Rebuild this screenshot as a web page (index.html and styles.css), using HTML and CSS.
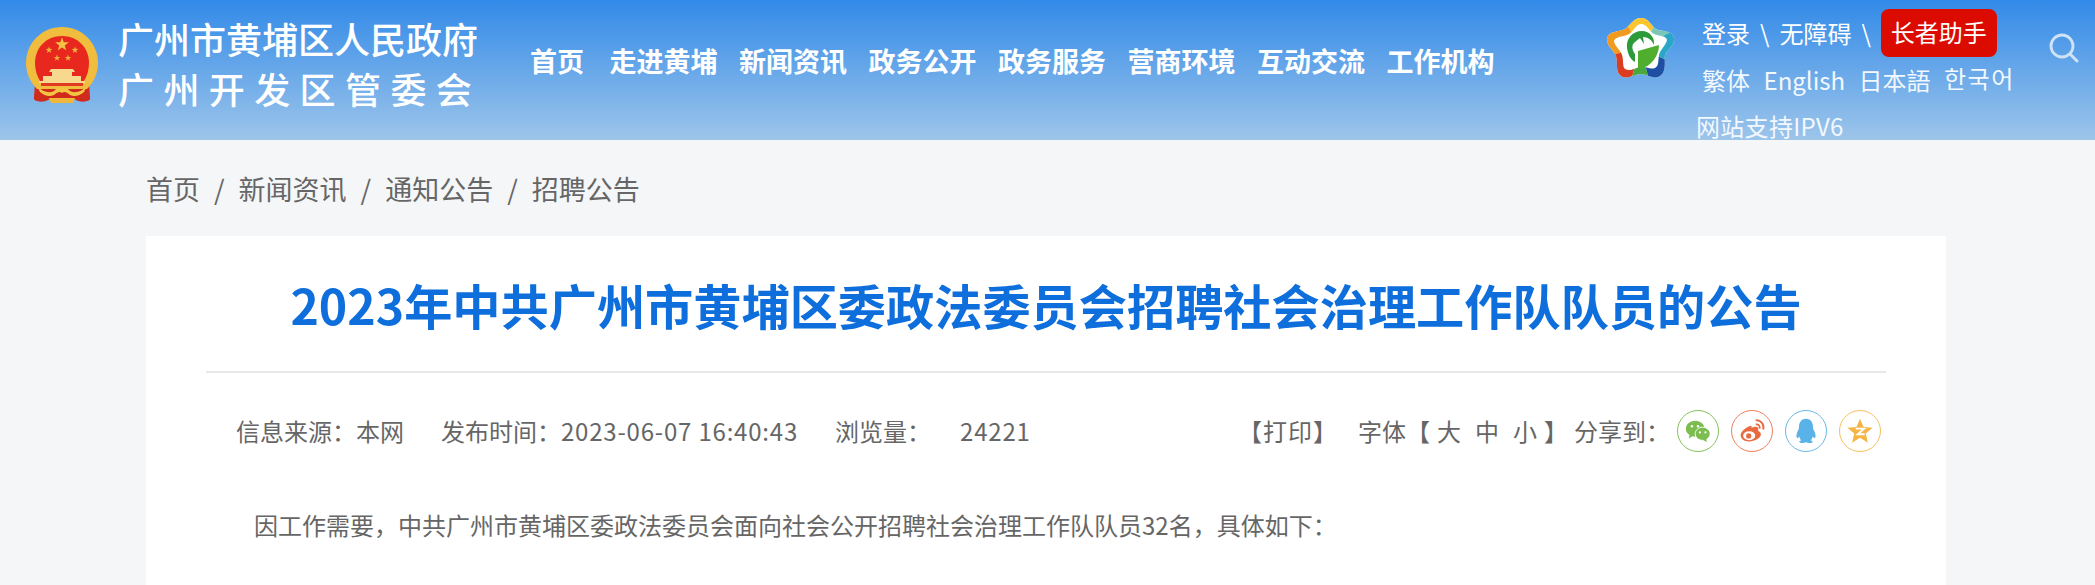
FILE: index.html
```html
<!DOCTYPE html>
<html lang="zh-CN">
<head>
<meta charset="utf-8">
<title>2023年中共广州市黄埔区委政法委员会招聘社会治理工作队队员的公告</title>
<link rel="stylesheet" href="styles.css">
</head>
<body>
<header class="site-header">
  <a class="brand">
    <svg class="emblem" viewBox="0 0 72 78" aria-hidden="true">
      <defs>
        <polygon id="star" points="0,-10 2.350,-3.240 9.510,-3.090 3.800,1.240 5.880,8.090 0,4 -5.880,8.090 -3.800,1.240 -9.510,-3.090 -2.350,-3.240"/>
      </defs>
      <path d="M9 56 L8 70 Q7 73 11 74 Q18 76 24 72 L48 72 Q54 76 61 74 Q65 73 64 70 L63 56 Z" fill="#cf2a1c"/>
      <path d="M36 0 C16 0 0 16 0 36 C0 46 4 55 11 62 L61 62 C68 55 72 46 72 36 C72 16 56 0 36 0 Z" fill="#f0bd3e"/>
      <path d="M36 9 C20 9 9 21 9 36 C9 43 11 49 14 54 L58 54 C61 49 63 43 63 36 C63 21 52 9 36 9 Z" fill="#e8281e"/>
      <use href="#star" transform="translate(36 17.500) scale(.72)" fill="#f4c344"/>
      <use href="#star" transform="translate(23 23) scale(.36)" fill="#eeb23c"/>
      <use href="#star" transform="translate(49 23) scale(.36)" fill="#eeb23c"/>
      <use href="#star" transform="translate(31 31) scale(.34)" fill="#eeb23c"/>
      <use href="#star" transform="translate(42 31) scale(.34)" fill="#eeb23c"/>
      <path d="M25 42 L47 42 L49 45 L46 45 L46 49 L55 49 L55 54 L17 54 L17 49 L26 49 L26 45 L23 45 Z" fill="#f6d98f"/>
      <rect x="13" y="54" width="46" height="2" fill="#f6d98f"/>
      <rect x="15" y="56" width="42" height="3" fill="#e03a22"/>
      <path d="M11 59 Q20 68 28 64 Q33 58 36 62 Q39 58 44 64 Q52 68 61 59 L58 65 Q51 71 44 68 Q39 63 36 66 Q33 63 28 68 Q21 71 14 65 Z" fill="#f4c443"/>
      <path d="M23 71 H49 L47 76 H25 Z" fill="#f0b83a"/>
    </svg>
    <span class="brand-text">
      <span class="brand-line">广州市黄埔区人民政府</span>
      <span class="brand-line brand-line-wide">广州开发区管委会</span>
    </span>
  </a>
  <nav class="main-nav">
    <a>首页</a><a>走进黄埔</a><a>新闻资讯</a><a>政务公开</a><a>政务服务</a><a>营商环境</a><a>互动交流</a><a>工作机构</a>
  </nav>
  <svg class="gov-logo" viewBox="0 0 68 62" aria-hidden="true">
    <defs>
      <clipPath id="petal">
        <path d="M34 0 C42 0 44 8 49 11 C55 14 66 12 67 20 C68 28 60 32 58 37 C57 43 60 53 53 58 C46 62 40 56 34 56 C28 56 21 62 14 58 C8 54 11 44 9 38 C7 32 0 29 0 21 C1 13 12 14 18 11 C23 8 26 0 34 0 Z"/>
      </clipPath>
    </defs>
    <g clip-path="url(#petal)">
      <rect width="68" height="62" fill="#fff"/>
      <polygon points="34,30 16,0 52,0" fill="#fbc52d"/>
      <polygon points="34,30 16,0 0,0 0,38" fill="#f29a1e"/>
      <polygon points="34,30 0,38 0,62 24,62" fill="#dc3d20"/>
      <polygon points="34,30 24,62 42,62" fill="#49a83a"/>
      <polygon points="34,30 42,62 68,62 68,46" fill="#1f4fa3"/>
      <polygon points="34,30 68,46 68,8" fill="#2aa6c6"/>
      <polygon points="34,30 52,0 68,0 68,12" fill="#7cc6b8"/>
    </g>
    <path d="M34 6 C40 6 42 13 47 16 C52 18 60 18 60 22 C59 27 53 32 52 37 C51 43 52 48 48 50 C43 52 38 48 33 49 C28 50 23 54 18 51 C15 48 17 43 15 37 C14 32 7 28 7 23 C8 18 17 19 22 16 C27 13 29 6 34 6 Z" fill="#fff"/>
    <path d="M35 13 C25 13 19 21 20 30 C21 37 24 42 28 44 L28 36 C25 32 24 27 28 24 L33 20 L37 26 L36 19 C41 19 45 22 47 27 C48 20 43 13 35 13 Z" fill="#2e9b3a"/>
    <path d="M31 33 L52 27 C52 37 45 48 33 51 L31 50 Z" fill="#4fae2e"/>
  </svg>
  <div class="tools">
    <div class="tools-row tools-row-top">
      <a>登录</a><span>\</span><a>无障碍</a><span>\</span><a class="elder">长者助手</a>
    </div>
    <div class="tools-row tools-row-lang">
      <a>繁体</a><a>English</a><a>日本語</a><a class="lang-ko" lang="ko">한국어</a>
    </div>
    <div class="ipv6">网站支持IPV6</div>
  </div>
  <svg class="search" viewBox="0 0 30 30" aria-hidden="true">
    <circle cx="13" cy="13" r="11" fill="none" stroke="#cfe2f6" stroke-width="2.800"/>
    <path d="M21 21 L28 28" stroke="#cfe2f6" stroke-width="3" stroke-linecap="round"/>
  </svg>
</header>

<main class="page">
  <div class="crumbs">
    <a>首页</a><span>/</span><a>新闻资讯</a><span>/</span><a>通知公告</a><span>/</span><a>招聘公告</a>
  </div>
  <article class="card">
    <h1 class="title">2023年中共广州市黄埔区委政法委员会招聘社会治理工作队队员的公告</h1>
    <div class="meta">
      <div class="meta-left">
        <span>信息来源：本网</span>
        <span>发布时间：<span class="date">2023-06-07 16:40:43</span></span>
        <span>浏览量：</span>
        <span class="views">24221</span>
      </div>
      <div class="meta-right">
        <span class="print">【打印】</span>
        <span class="size">字体【<i>大</i><i>中</i><i>小</i>】</span>
        <span>分享到：</span>
        <div class="share">
          <a class="share-btn wechat">
            <svg viewBox="0 0 30 30" aria-hidden="true">
              <path d="M12 4 C6 4 2 8 2 12.500 C2 15.500 3.600 17.800 6 19.200 L5 23 L9.200 20.500 C10 20.700 11 20.800 12 20.800 C18 20.800 22 17 22 12.500 C22 8 18 4 12 4 Z" fill="#7cbd4f"/>
              <path d="M20 11 C15.500 11 12 14.200 12 18 C12 21.800 15.500 25 20 25 L25 27.500 L24.400 23.800 C26.800 22.400 28 20.300 28 18 C28 14.200 24.500 11 20 11 Z" fill="#7cbd4f" stroke="#fff" stroke-width="1"/>
              <circle cx="8.500" cy="10" r="1.300" fill="#fff"/><circle cx="15" cy="10" r="1.300" fill="#fff"/>
              <circle cx="17" cy="16.500" r="1.200" fill="#fff"/><circle cx="23" cy="16.500" r="1.200" fill="#fff"/>
            </svg>
          </a>
          <a class="share-btn weibo">
            <svg viewBox="0 0 30 30" aria-hidden="true">
              <path d="M12 10 C6 13 2 17 3 21 C4 25 9 27 14 26 C20 25 25 22 24.500 18 C24 15.500 21.500 15.500 21.500 14.500 C22.500 12 21 10 18 10.500 L14.500 11.500 C15 9.500 14 8.800 12 10 Z" fill="#ea6a3f"/>
              <ellipse cx="12" cy="20" rx="6.500" ry="4.800" fill="#fff"/>
              <circle cx="11.500" cy="20.300" r="2.800" fill="#ea6a3f"/>
              <path d="M19 3.500 C24.500 3 28.500 8 27 13.500 M19 8 C22 7.500 24 10 23 12.500" fill="none" stroke="#ea6a3f" stroke-width="2"/>
            </svg>
          </a>
          <a class="share-btn qq">
            <svg viewBox="0 0 30 30" aria-hidden="true">
              <path d="M15 2 C9.500 2 7.500 6.500 7.500 11 C7.500 13 6.500 14 5.500 16.500 C4.500 19 4.500 22 5.500 22.500 C6.300 22.800 7.200 21.500 7.800 20.500 C8 22.500 9 24 10 25 C8.500 25.500 7.500 26.200 8 27 C8.800 28.200 13 28 15 27 C17 28 21.200 28.200 22 27 C22.500 26.200 21.500 25.500 20 25 C21 24 22 22.500 22.200 20.500 C22.800 21.500 23.700 22.800 24.500 22.500 C25.500 22 25.500 19 24.500 16.500 C23.500 14 22.500 13 22.500 11 C22.500 6.500 20.500 2 15 2 Z" fill="#5ab3e8"/>
            </svg>
          </a>
          <a class="share-btn qzone">
            <svg viewBox="0 0 30 30" aria-hidden="true">
              <polygon points="15,2 18.800,10.800 28.500,11.500 21.200,17.800 23.500,27.500 15,22.300 6.500,27.500 8.800,17.800 1.500,11.500 11.200,10.800" fill="#f5b544"/>
              <path d="M10.500 12.500 H19.500 L12.500 18.500 H20" fill="none" stroke="#fff" stroke-width="2"/>
            </svg>
          </a>
        </div>
      </div>
    </div>
    <p class="body-text">因工作需要，中共广州市黄埔区委政法委员会面向社会公开招聘社会治理工作队队员32名，具体如下：</p>
  </article>
</main>
</body>
</html>
```

FILE: styles.css
```css
* {
  box-sizing: border-box;
}

html,
body {
  margin: 0;
  height: 585px;
  overflow: hidden;
}

body {
  background: #f5f6f8;
  color: #666;
  font-family: "Noto Sans CJK SC", "Noto Sans", sans-serif;
  font-size: 24px;
}

.site-header {
  display: flex;
  align-items: flex-start;
  height: 140px;
  padding-left: 26px;
  background: linear-gradient(180deg, #328ae8 0%, #9dc5ea 100%);
  color: #fff;
}

.brand {
  display: flex;
  align-items: flex-start;
  width: 504px;
  padding-top: 27px;
}

.emblem {
  width: 72px;
  height: 78px;
  flex: none;
}

.brand-text {
  display: flex;
  flex-direction: column;
  gap: 6px;
  margin-left: 20px;
  margin-top: -11px;
}

.brand-line {
  font-size: 36px;
  line-height: 44px;
  font-weight: 500;
  white-space: nowrap;
}

.brand-line-wide {
  letter-spacing: 9.4px;
}

.main-nav {
  display: flex;
  gap: 21.5px;
  width: 1077px;
  padding-top: 41px;
  font-size: 27px;
  line-height: 40px;
  font-weight: 700;
  white-space: nowrap;
}

.main-nav a:first-child {
  margin-right: 4px;
}

.gov-logo {
  flex: none;
  width: 68px;
  height: 62px;
  margin-top: 18px;
  margin-right: -68px;
}

.tools {
  width: 347px;
  padding-top: 9px;
  margin-left: 95px;
  flex: none;
  font-size: 24px;
  line-height: 36px;
}

.tools-row {
  display: flex;
  align-items: center;
  white-space: nowrap;
}

.tools-row-top {
  gap: 10px;
  height: 48px;
}

.elder {
  height: 48px;
  padding: 0 10px;
  border-radius: 8px;
  background: #dc0b00;
  line-height: 46px;
}

.tools-row-lang {
  gap: 13.5px;
  height: 46px;
  color: #f2f8fe;
}

.lang-ko {
  font-family: "Noto Sans CJK KR", sans-serif;
  margin-top: -4px;
  letter-spacing: 1.5px;
}

.ipv6 {
  margin-left: -6px;
  margin-top: 1px;
  line-height: 44px;
  letter-spacing: 0.3px;
  color: #f2f8fe;
  white-space: nowrap;
}

.search {
  flex: none;
  width: 30px;
  height: 30px;
  margin-top: 33px;
}

.page {
  padding: 0 149px 0 146px;
}

.crumbs {
  display: flex;
  align-items: center;
  gap: 12px;
  height: 96px;
  padding-top: 2px;
  font-size: 27px;
  line-height: 40px;
  white-space: nowrap;
}

.crumbs span {
  color: #666;
  margin: 0 2px;
}

.card {
  height: 349px;
  padding: 0 60px;
  background: #fff;
}

.title {
  height: 137px;
  margin: 0;
  border-bottom: 2px solid #e6e8ea;
  color: #0e6fdc;
  font-size: 48.2px;
  line-height: 136px;
  font-weight: 700;
  text-align: center;
  white-space: nowrap;
}

.meta {
  display: flex;
  justify-content: space-between;
  align-items: center;
  height: 62px;
  margin-top: 27px;
  padding: 0 5px 0 30px;
  line-height: 42px;
  white-space: nowrap;
}

.meta-left,
.meta-right {
  display: flex;
  align-items: center;
}

.meta-left {
  gap: 37px;
}

.date {
  letter-spacing: 0.8px;
}

.views {
  margin-left: -8px;
  letter-spacing: 0.8px;
}

.print {
  margin-right: 20px;
  letter-spacing: 1px;
}

.size {
  margin-right: 6px;
}

.size i {
  font-style: normal;
  margin: 0 7px;
}

.share {
  display: flex;
  gap: 12px;
  margin-left: 7px;
}

.share-btn {
  display: flex;
  align-items: center;
  justify-content: center;
  width: 42px;
  height: 42px;
  border: 1.5px solid;
  border-radius: 50%;
}

.share-btn svg {
  width: 28px;
  height: 28px;
}

.wechat {
  border-color: #86c25c;
}

.weibo {
  border-color: #e9815c;
}

.qq {
  border-color: #6db9e6;
}

.qzone {
  border-color: #f5c261;
}

.body-text {
  margin: 42px 0 0;
  padding-left: 48px;
  line-height: 42px;
  white-space: nowrap;
}
```
